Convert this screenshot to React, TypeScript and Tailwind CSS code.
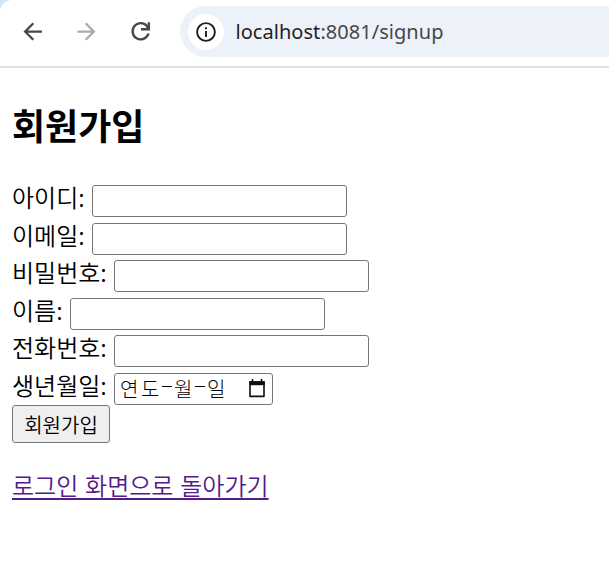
import React from "react";

const fields = [
  { label: "아이디:", type: "text" },
  { label: "이메일:", type: "text" },
  { label: "비밀번호:", type: "password" },
  { label: "이름:", type: "text" },
  { label: "전화번호:", type: "text" },
];

function Toolbar() {
  return (
    <div className="bg-[#d3e3fd]">
      <header className="flex h-[68px] items-start rounded-tl-[12px] border-b-2 border-[#e1e1e1] bg-white pt-[6px]">
        <div className="flex h-[51px] w-[180px] shrink-0 items-center gap-[27px] pl-[19px]">
          <svg className="size-[27px]" viewBox="0 0 24 24" fill="#474747">
            <path d="M20.4 11H7.83l5.59-5.59L12 4l-8 8 8 8 1.41-1.41L7.83 13H20.4v-2z" />
          </svg>
          <svg className="size-[27px]" viewBox="0 0 24 24" fill="#ababab">
            <path d="M12 4l-1.41 1.41L16.17 11H4v2h12.17l-5.58 5.59L12 20l8-8z" />
          </svg>
          <svg className="size-[27px]" viewBox="0 0 24 24" fill="none" stroke="#474747" strokeWidth="2.1">
            <path d="M18.9 9.2A7.2 7.2 0 1 0 19.1 13.8" />
            <path d="M19.4 3.8v6.2h-7" />
          </svg>
        </div>
        <div className="flex h-[51px] flex-1 items-center rounded-l-full bg-[#ecf1fa] pl-[7.5px]">
          <div className="flex size-9 items-center justify-center rounded-full bg-white">
            <svg className="size-5" viewBox="0 0 20 20" fill="none" stroke="#1f1f1f" strokeWidth="1.9">
              <circle cx="10" cy="10" r="8.9" />
              <path d="M10 9v6M10 5.2v2" />
            </svg>
          </div>
          <span className="ml-[12px] font-['Noto_Sans',sans-serif] text-[20px] leading-[30px] tracking-[0.04px] whitespace-nowrap text-[#474747]">
            <span className="text-[#1f1f1f]">localhost</span>:8081/signup
          </span>
        </div>
      </header>
    </div>
  );
}

export default function App() {
  return (
    <div className="h-[568px] overflow-hidden bg-white font-['Noto_Sans_CJK_KR',sans-serif] text-black">
      <Toolbar />
      <main className="px-3 pt-[30px]">
        <h2 className="text-[36px] leading-[53px] font-bold">회원가입</h2>
        <form className="pt-[29px]">
          {fields.map((f) => (
            <div key={f.label} className="flex h-[37.5px] items-start">
              <span className="text-[24px] leading-[34px] font-[350] [word-spacing:1.8px] whitespace-pre">{f.label} </span>
              <input
                type={f.type}
                aria-label={f.label}
                className="mt-[5px] h-8 w-[255px] rounded-[3px] border border-[#767676] bg-white px-1 outline-none"
              />
            </div>
          ))}
          <div className="flex h-[37.5px] items-start">
            <span className="text-[24px] leading-[34px] font-[350] [word-spacing:1.8px] whitespace-pre">생년월일: </span>
            <div className="mt-[5px] flex h-8 w-[159px] items-center rounded-[3px] border border-[#767676] bg-white pr-[6px] pl-[5px] text-[20px] leading-[28px] font-light">
              <span className="w-[21px]">연</span>
              <span className="w-[21px]">도</span>
              <span className="mr-[2px] -mt-1 h-px w-[10px] bg-black" />
              <span className="w-[21px]">월</span>
              <span className="mr-[2px] -mt-1 h-px w-[10px] bg-black" />
              <span className="w-[18px]">일</span>
              <svg className="ml-auto h-[19px] w-[18px]" viewBox="0 0 18 19" fill="none" stroke="#101010">
                <path d="M2 3h14v14.4H2z" strokeWidth="1.6" strokeLinejoin="round" />
                <path d="M1.2 4.2h15.6" strokeWidth="4" />
                <path d="M4.5 0v3M13.5 0v3" strokeWidth="1.6" />
              </svg>
            </div>
          </div>
          <button
            type="button"
            className="block h-[38px] w-[98px] rounded-[3px] border border-[#767676] bg-[#efefef] pt-px text-[20px] leading-[30px] font-[350]"
          >
            회원가입
          </button>
        </form>
        <a
          href="#login"
          className="mt-[24px] inline-block text-[24px] leading-[36px] font-[350] [word-spacing:1.5px] text-[#551a8b] underline decoration-2 underline-offset-[3px]"
        >
          로그인 화면으로 돌아가기
        </a>
      </main>
    </div>
  );
}
